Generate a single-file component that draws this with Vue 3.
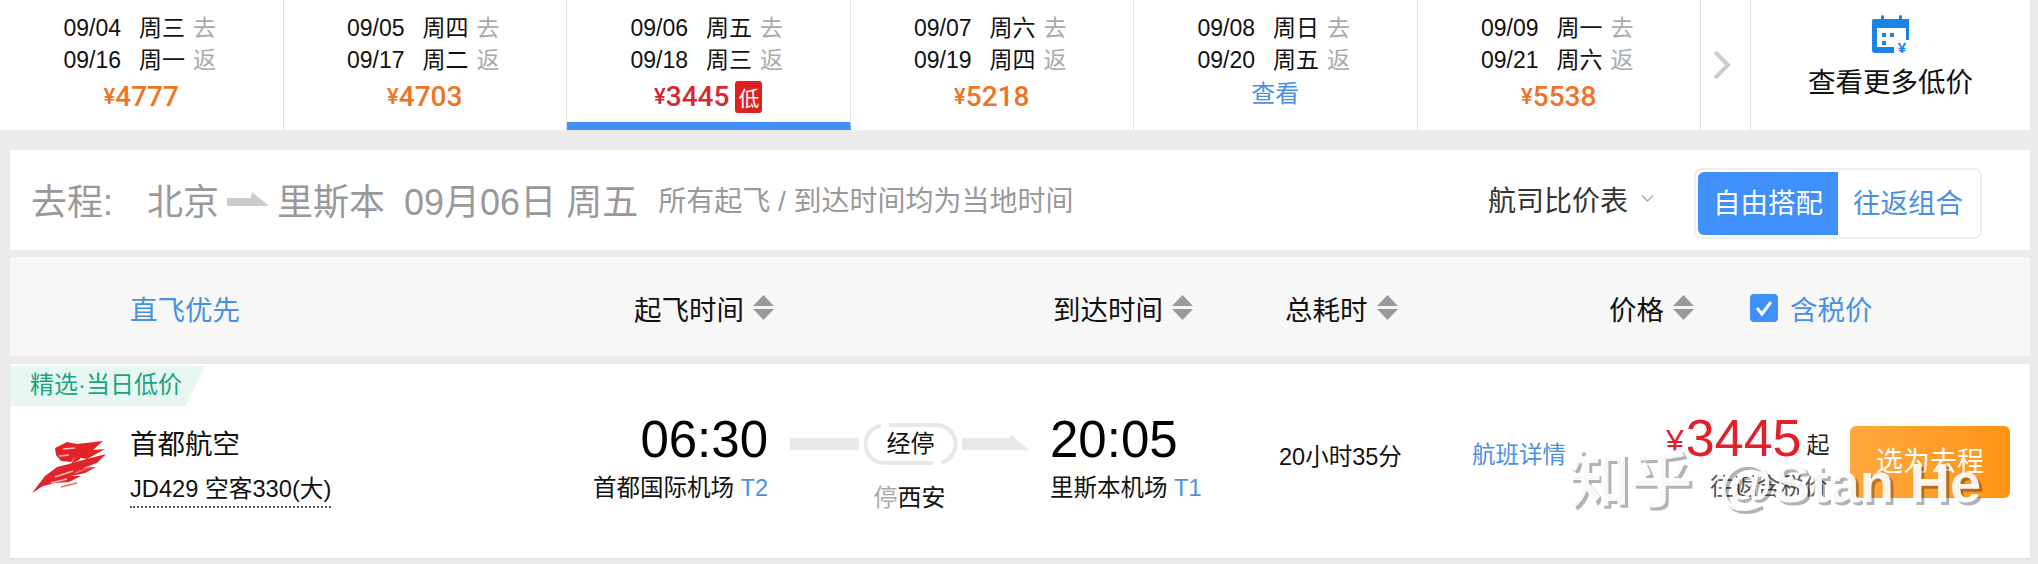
<template>
    <div class="page">
        <!-- 日期价格条 -->
        <div class="date-strip">
            <div v-for="d in dates" :key="d.go" class="date-cell" :class="{ active: d.low }">
                <div class="date-line">{{ d.go }}<span class="week">{{ d.goWeek }}</span><span class="dir">去</span></div>
                <div class="date-line">{{ d.back }}<span class="week">{{ d.backWeek }}</span><span class="dir">返</span></div>
                <div v-if="d.price" class="date-price" :class="{ low: d.low }">
                    <span class="yen">¥</span>{{ d.price }}<span v-if="d.low" class="low-tag">低</span>
                </div>
                <div v-else class="date-look">查看</div>
            </div>
            <div class="strip-arrow">
                <svg width="18" height="30" viewBox="0 0 18 30">
                    <path d="M2 2 L15 15 L2 28" fill="none" stroke="#cdcdcd" stroke-width="4" />
                </svg>
            </div>
            <div class="strip-more">
                <svg width="38" height="38" viewBox="0 0 38 38">
                    <rect x="9" y="0" width="3" height="7" rx="1.5" fill="#1b82e6" />
                    <rect x="27" y="0" width="3" height="7" rx="1.5" fill="#1b82e6" />
                    <path d="M2 4 H37 V25 H34 V13 H5 V32 H22 V38 H3 Q0 38 0 35 V6 Q0 4 2 4 Z" fill="#1b82e6" />
                    <rect x="10" y="18" width="4" height="4" fill="#1b82e6" />
                    <rect x="18" y="18" width="4" height="4" fill="#1b82e6" />
                    <rect x="10" y="26" width="4" height="4" fill="#1b82e6" />
                    <text x="30" y="38" text-anchor="middle" class="cal-yen">¥</text>
                </svg>
                <div class="more-text">查看更多低价</div>
            </div>
        </div>

        <!-- 去程标题 -->
        <div class="trip-bar">
            <span class="trip-label">去程:</span>
            <span class="trip-from">北京</span>
            <svg class="trip-arrow" width="42" height="14" viewBox="0 0 42 14">
                <polygon points="0,6 24,6 25,0 42,14 0,14" fill="#cccccc" />
            </svg>
            <span>里斯本</span>
            <span class="trip-date">09月06日 周五</span>
            <span class="trip-note">所有起飞 / 到达时间均为当地时间</span>
            <span class="compare">航司比价表
                <svg width="15" height="9" viewBox="0 0 15 9">
                    <path d="M2 1.5 L7.5 7 L13 1.5" fill="none" stroke="#aaa" stroke-width="1.5" />
                </svg>
            </span>
            <div class="switcher">
                <span class="switch-item on">自由搭配</span>
                <span class="switch-item">往返组合</span>
            </div>
        </div>

        <!-- 排序栏 -->
        <div class="sort-bar">
            <span class="sort-link">直飞优先</span>
            <span v-for="s in sorts" :key="s" class="sort-item">{{ s }}
                <svg width="23" height="25" viewBox="0 0 23 25">
                    <polygon points="11.5,0 22,11 1,11" fill="#999" />
                    <polygon points="1,14 22,14 11.5,25" fill="#999" />
                </svg>
            </span>
            <span class="tax">
                <svg width="28" height="28" viewBox="0 0 28 28">
                    <rect width="28" height="28" rx="4" fill="#3f90fb" />
                    <path d="M7 14 L12 20 L21 8" fill="none" stroke="#fff" stroke-width="3" />
                </svg>
                含税价
            </span>
        </div>

        <!-- 航班卡片 -->
        <div class="flight-card">
            <div class="flight-tag">精选·当日低价</div>
            <div class="flight-logo">
                <svg width="90" height="70" viewBox="0 0 90 70">
                    <path d="M30 18 L42 12 L52 14 L78 11 L68 20 L80 19 L62 29 L50 27 L46 32 L36 31 L31 25 Z" fill="#e2242a" />
                    <path d="M7 63 L20 46 L32 37 L44 34 L58 30 L81 24 L72 33 L58 38 L71 37 L60 43 L46 46 L56 46 L44 52 L30 53 L18 56 Z" fill="#e2242a" />
                    <path d="M60 21 L54 30 L46 34 L50 27 Z" fill="#e2242a" />
                    <path d="M38 19 L50 18 M34 26 L44 25 M30 47 L48 41 M26 53 L42 49" fill="none" stroke="#f9b9b9" stroke-width="1.5" />
                    <path d="M36 57 L52 53 M50 43 L66 37" fill="none" stroke="#ee6a6a" stroke-width="1.5" />
                </svg>
            </div>
            <div class="airline">
                <div class="airline-name">首都航空</div>
                <span class="airline-no">JD429 空客330(大)</span>
            </div>
            <div class="depart">
                <div class="clock">06:30</div>
                <div class="airport">首都国际机场 <span class="terminal">T2</span></div>
            </div>
            <div class="stop">
                <div class="stop-line">
                    <div class="line-left"></div>
                    <div class="stop-pill">
                        <svg class="pill-ring" width="95" height="44" viewBox="0 0 95 44">
                            <path d="M18 3.5 C8 6 2.5 13 2.5 22 C2.5 33 11 41 22 41 L70 41" fill="none" stroke="#e8e8e8" stroke-width="4" />
                            <path d="M26 3 L73 3 C84 3 92.5 11 92.5 22 C92.5 31 87 38 78 40.5" fill="none" stroke="#e8e8e8" stroke-width="4" />
                        </svg>
                        经停
                    </div>
                    <svg width="67" height="15" viewBox="0 0 67 15" class="line-right">
                        <polygon points="0,3 48,3 49,0 67,15 0,15" fill="#e8e8e8" />
                    </svg>
                </div>
                <div class="stop-city"><span class="stop-word">停</span>西安</div>
            </div>
            <div class="arrive">
                <div class="clock">20:05</div>
                <div class="airport">里斯本机场 <span class="terminal">T1</span></div>
            </div>
            <div class="duration">20小时35分</div>
            <div class="detail">航班详情</div>
            <div class="price">
                <div class="price-main"><span class="price-yen">¥</span>3445<span class="price-from">起</span></div>
                <div class="price-sub">往返含税价</div>
            </div>
            <div class="choose">选为去程</div>
        </div>

        <div class="watermark"><span class="wm-cn">知乎</span><span class="wm-en">@Stan He</span></div>
    </div>
</template>

<script setup>
const dates = [
    { go: '09/04', goWeek: '周三', back: '09/16', backWeek: '周一', price: 4777 },
    { go: '09/05', goWeek: '周四', back: '09/17', backWeek: '周二', price: 4703 },
    { go: '09/06', goWeek: '周五', back: '09/18', backWeek: '周三', price: 3445, low: true },
    { go: '09/07', goWeek: '周六', back: '09/19', backWeek: '周四', price: 5218 },
    { go: '09/08', goWeek: '周日', back: '09/20', backWeek: '周五', price: null },
    { go: '09/09', goWeek: '周一', back: '09/21', backWeek: '周六', price: 5538 }
]

const sorts = ['起飞时间', '到达时间', '总耗时', '价格']
</script>

<style>
html, body {
    margin: 0;
    background: #ebebeb;
}
</style>

<style scoped>
.page {
    position: relative;
    width: 2038px;
    height: 564px;
    overflow: hidden;
    box-sizing: border-box;
    padding-right: 8px;
    background: #ebebeb;
    color: #111;
    font-family: "Liberation Sans", "Noto Sans CJK SC", sans-serif;
    font-size: 24px;
}
.date-strip {
    display: flex;
    height: 130px;
    background: #fff;
    margin-bottom: 20px;
}
.date-cell {
    box-sizing: border-box;
    width: 283.5px;
    padding-top: 12px;
    text-align: center;
    border-right: 1px solid #e4e4e4;
}
.date-cell.active {
    border-bottom: 8px solid #3f90fb;
}
.date-line {
    height: 32px;
    line-height: 32px;
    font-size: 23px;
    padding-right: 3px;
}
.week {
    margin-left: 18px;
}
.dir {
    margin-left: 8px;
    color: #aaa;
}
.date-price {
    display: flex;
    justify-content: center;
    align-items: center;
    height: 38px;
    margin-top: 2px;
    line-height: 38px;
    font-family: Roboto, "Liberation Sans", sans-serif;
    font-weight: 500;
    font-size: 28px;
    color: #ef7325;
}
.date-price.low {
    color: #d5282f;
}
.yen {
    font-size: 22px;
}
.low-tag {
    width: 27px;
    height: 32px;
    margin-left: 6px;
    line-height: 32px;
    text-align: center;
    border-radius: 3px;
    background: #e02020;
    color: #fff;
    font-family: "Noto Sans CJK SC", sans-serif;
    font-weight: 400;
    font-size: 21px;
}
.date-look {
    height: 32px;
    margin-top: 2px;
    line-height: 32px;
    font-size: 24px;
    color: #4a90e2;
}
.strip-arrow {
    box-sizing: border-box;
    display: flex;
    align-items: center;
    width: 50px;
    padding-left: 12px;
    border-right: 1px solid #e4e4e4;
}
.strip-more {
    flex: 1;
    padding-top: 15px;
    text-align: center;
}
.strip-more svg {
    display: block;
    margin: 0 auto;
}
.cal-yen {
    font-size: 15px;
    font-weight: bold;
    fill: #1b82e6;
}
.more-text {
    margin-top: 12px;
    line-height: 36px;
    font-size: 27.5px;
}
.trip-bar {
    display: flex;
    align-items: center;
    box-sizing: border-box;
    height: 100px;
    margin: 0 0 7px 10px;
    padding: 0 48px 3px 21px;
    background: #fff;
    color: #999;
    font-size: 36px;
}
.trip-from {
    margin-left: 34px;
}
.trip-arrow {
    margin: 0 8px 0 8px;
}
.trip-date {
    margin-left: 19px;
}
.trip-note {
    margin-left: 20px;
    font-size: 28px;
}
.compare {
    display: flex;
    align-items: center;
    gap: 12px;
    margin-left: auto;
    color: #333;
    font-size: 28px;
}
.switcher {
    display: flex;
    box-sizing: border-box;
    height: 71px;
    margin: 9px 0 0 39px;
    padding: 2px;
    border: 2px solid #eee;
    border-radius: 8px;
    font-size: 27.5px;
    color: #4a90e2;
}
.switch-item {
    width: 140px;
    line-height: 63px;
    text-align: center;
}
.switch-item.on {
    background: #3f90fb;
    border-radius: 6px 0 0 6px;
    color: #fff;
}
.sort-bar {
    display: grid;
    grid-template-columns: 504px 419px 232px 324px 141px 1fr;
    align-items: center;
    box-sizing: border-box;
    height: 99px;
    margin: 0 0 8px 10px;
    padding: 2px 0 0 120px;
    background: #f7f7f7;
    font-size: 27.5px;
}
.sort-link {
    color: #4a90e2;
}
.sort-item {
    display: flex;
    align-items: center;
    gap: 8px;
}
.tax {
    display: flex;
    align-items: center;
    gap: 12px;
    color: #4a90e2;
}
.flight-card {
    position: relative;
    display: grid;
    grid-template-columns: 98px 330px 308px 282px 229px 193px 194px 184px 160px;
    align-items: start;
    box-sizing: border-box;
    height: 194px;
    margin-left: 10px;
    padding-left: 22px;
    background: #fff;
    box-shadow: 0 1px 2px rgba(0, 0, 0, 0.08);
}
.flight-tag {
    position: absolute;
    top: 2px;
    left: 0;
    width: 195px;
    height: 40px;
    box-sizing: border-box;
    padding-left: 20px;
    line-height: 38px;
    font-size: 24px;
    color: #1ea37e;
    background: #e6f7f2;
    clip-path: polygon(0 0, 100% 0, 176px 100%, 0 100%);
}
.flight-logo {
    margin-left: -7px;
    padding-top: 66px;
}
.flight-logo svg {
    display: block;
}
.airline {
    padding-top: 63px;
}
.airline-name {
    height: 36px;
    line-height: 36px;
    margin-bottom: 9px;
    font-size: 27.5px;
}
.airline-no {
    display: inline-block;
    height: 34px;
    line-height: 34px;
    font-size: 23.7px;
    border-bottom: 2px dotted #555;
}
.depart {
    padding-top: 48px;
    text-align: right;
}
.arrive {
    padding-top: 48px;
}
.clock {
    height: 56px;
    line-height: 56px;
    margin-bottom: 3px;
    font-size: 51px;
    color: #000;
}
.airport {
    height: 34px;
    line-height: 34px;
    font-size: 23.5px;
}
.terminal {
    color: #4a90e2;
}
.stop {
    padding: 58px 0 0 22px;
}
.stop-line {
    display: flex;
    align-items: center;
    gap: 4px;
    width: 239px;
}
.line-left {
    width: 69px;
    height: 12px;
    background: #e8e8e8;
}
.line-right {
    display: block;
    margin-top: -3px;
}
.stop-pill {
    position: relative;
    width: 95px;
    height: 44px;
    line-height: 44px;
    text-align: center;
    font-size: 24px;
}
.pill-ring {
    position: absolute;
    top: 0;
    left: 0;
}
.stop-city {
    width: 239px;
    margin-top: 15px;
    line-height: 34px;
    text-align: center;
    font-size: 24px;
}
.stop-word {
    color: #aaa;
}
.duration {
    padding-top: 76px;
    line-height: 34px;
    font-size: 23.5px;
}
.detail {
    padding-top: 74px;
    line-height: 34px;
    font-size: 23.5px;
    color: #4a90e2;
}
.price {
    padding-top: 44px;
}
.price-main {
    display: flex;
    align-items: flex-end;
    height: 60px;
    line-height: 60px;
    font-size: 52px;
    color: #e0202a;
}
.price-yen {
    margin-right: 2px;
    font-size: 32px;
    line-height: 54px;
}
.price-from {
    margin-left: 5px;
    line-height: 46px;
    font-size: 23px;
    color: #222;
}
.price-sub {
    padding-left: 44px;
    margin-top: 2px;
    line-height: 34px;
    font-size: 23.5px;
    color: #555;
}
.choose {
    height: 72px;
    margin-top: 62px;
    line-height: 72px;
    text-align: center;
    border-radius: 6px;
    background: linear-gradient(90deg, #ffa83e, #ff9416);
    color: #fff;
    font-size: 27px;
}
.watermark {
    position: absolute;
    top: 446px;
    left: 1568px;
    white-space: nowrap;
    line-height: 70px;
    font-weight: bold;
    color: rgba(255, 255, 255, 0.92);
    text-shadow: 3px 3px 0 rgba(0, 0, 0, 0.3);
}
.wm-cn {
    font-size: 62px;
}
.wm-en {
    margin-left: 26px;
    font-size: 56px;
}
</style>
